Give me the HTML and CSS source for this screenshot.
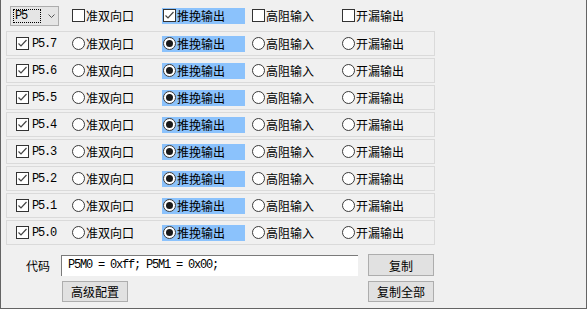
FILE: index.html
```html
<!DOCTYPE html>
<html lang="zh">

<head>
    <meta charset="UTF-8">
    <title>IO 口模式配置</title>
    <link rel="stylesheet" href="styles.css">
</head>

<body>
    <div class="window">
        <div class="header">
            <div class="lead">
                <div class="combo">
                    <span class="combo-text">P5</span>
                    <svg class="chevron" width="7" height="4" viewBox="0 0 7 4"><path d="M0.5 0.5 L3.5 3.5 L6.5 0.5" fill="none" stroke="#555" stroke-width="1"/></svg>
                </div>
            </div>
            <div class="opt"><span class="box"></span><span class="label">准双向口</span></div>
            <div class="opt"><span class="hl"><span class="box checked"></span><span class="label">推挽输出</span></span></div>
            <div class="opt"><span class="box"></span><span class="label">高阻输入</span></div>
            <div class="opt"><span class="box"></span><span class="label">开漏输出</span></div>
        </div>

        <div class="pin-list" id="pin-list"></div>

        <div class="code-area">
            <div class="code-label">代码</div>
            <div class="code-input">P5M0 = 0xff; P5M1 = 0x00;</div>
            <button class="btn btn-copy">复制</button>
            <div></div>
            <button class="btn btn-adv">高级配置</button>
            <button class="btn">复制全部</button>
        </div>
    </div>

    <script>
        const modes = ['准双向口', '推挽输出', '高阻输入', '开漏输出'];
        const selected = 1;
        const pinList = document.getElementById('pin-list');

        // 生成 P5.7 ~ P5.0
        for (let bit = 7; bit >= 0; bit--) {
            const row = document.createElement('div');
            row.className = 'pin-row';

            const lead = document.createElement('div');
            lead.className = 'lead';
            lead.innerHTML = '<span class="box checked"></span><span class="pin-name">P5.' + bit + '</span>';
            row.appendChild(lead);

            modes.forEach((mode, i) => {
                const opt = document.createElement('div');
                opt.className = 'opt';
                const inner = '<span class="radio' + (i === selected ? ' on' : '') + '"></span><span class="label">' + mode + '</span>';
                opt.innerHTML = i === selected ? '<span class="hl">' + inner + '</span>' : inner;
                row.appendChild(opt);
            });

            pinList.appendChild(row);
        }
    </script>
</body>

</html>
```

FILE: styles.css
```css
* {
    box-sizing: border-box;
}

body {
    margin: 0;
    font-family: "Noto Sans CJK SC", "Microsoft YaHei", sans-serif;
    font-size: 12px;
    color: #000;
}

.window {
    width: 587px;
    height: 309px;
    background-color: #f0f0f0;
    border: 1px solid #646464;
    border-top: none;
    padding-left: 5px;
}

/* 顶部 */
.header {
    display: flex;
    align-items: center;
    height: 31px;
}

.header .lead {
    width: 66px;
    padding-left: 4px;
}

.combo {
    width: 49px;
    height: 20px;
    border: 1px solid #adadad;
    background-color: #e5e5e5;
    display: flex;
    align-items: center;
    padding-left: 2px;
}

.combo-text {
    width: 28px;
    height: 14px;
    border: 1px dotted #000;
    font-family: "Liberation Mono", monospace;
    font-size: 12px;
    letter-spacing: -1.2px;
    line-height: 12px;
    padding-left: 1px;
}

.chevron {
    margin-left: 7px;
}

.opt {
    width: 90px;
    display: flex;
    align-items: center;
    height: 16px;
}

.hl {
    display: flex;
    align-items: center;
    width: 83px;
    height: 16px;
    padding-left: 1px;
    background-color: #8bc2fc;
}

.label {
    margin-left: 1px;
    line-height: 16px;
}

.box,
.radio {
    display: inline-block;
    width: 13px;
    height: 13px;
    flex-shrink: 0;
    background-color: #fff;
    border: 1px solid #333;
}

.box.checked {
    background: #fff url("data:image/svg+xml,%3Csvg xmlns='http://www.w3.org/2000/svg' width='11' height='11'%3E%3Cpath d='M1.5 5.5 L4 8 L9.5 2' fill='none' stroke='%23444' stroke-width='1.2'/%3E%3C/svg%3E") no-repeat center;
}

.radio {
    border-radius: 50%;
    border-color: #3a3a3a;
    position: relative;
}

.radio.on::after {
    content: "";
    position: absolute;
    left: 2px;
    top: 2px;
    width: 7px;
    height: 7px;
    border-radius: 50%;
    background-color: #1a1a1a;
}

/* 引脚列表 */
.pin-list {
    display: flex;
    flex-direction: column;
    gap: 2px;
}

.pin-row {
    width: 429px;
    height: 25px;
    border: 1px solid #dadada;
    display: flex;
    align-items: center;
}

.pin-row .lead {
    width: 65px;
    padding-left: 9px;
    display: flex;
    align-items: center;
}

.pin-name {
    margin-left: 3px;
    font-family: "Liberation Mono", monospace;
    font-size: 12px;
    letter-spacing: -1.2px;
}

/* 代码区 */
.code-area {
    margin-top: 9px;
    display: grid;
    grid-template-columns: 55px 307px 66px;
    grid-template-rows: 22px 21px;
    row-gap: 5px;
    align-items: center;
}

.code-label {
    text-align: right;
    padding-right: 11px;
}

.code-input {
    width: 297px;
    height: 21px;
    background-color: #fff;
    border-top: 1px solid #7a7a7a;
    border-left: 1px solid #7a7a7a;
    padding-left: 6px;
    font-family: "Liberation Mono", monospace;
    font-size: 12px;
    letter-spacing: -1.2px;
    line-height: 19px;
    white-space: pre;
}

.btn {
    height: 21px;
    width: 66px;
    padding: 0;
    border: 1px solid #adadad;
    background-color: #e1e1e1;
    font-family: "Noto Sans CJK SC", sans-serif;
    font-size: 12px;
    color: #000;
}

.btn-copy {
    height: 22px;
}

.btn-adv {
    margin-left: 1px;
}
```
